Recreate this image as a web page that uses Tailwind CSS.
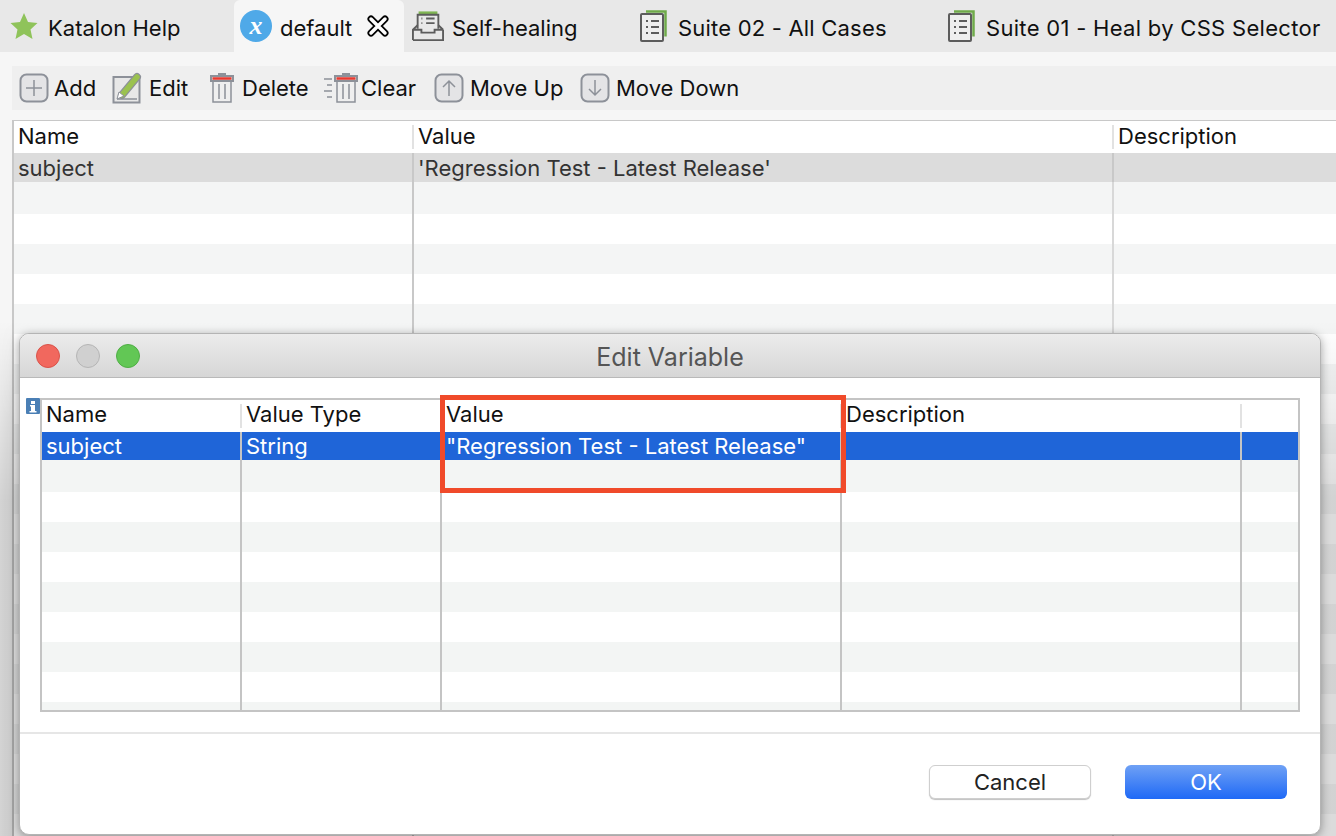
<!DOCTYPE html>
<html lang="en">
<head>
  <meta charset="UTF-8" />
  <title>Katalon Edit Variable</title>
  <script src="https://cdn.jsdelivr.net/npm/@tailwindcss/browser@4"></script>
</head>
<body class="relative w-[1336px] h-[836px] overflow-hidden bg-[#f6f6f6] text-[22px] leading-[28px] text-[#111] font-['Inter','Liberation_Sans',sans-serif]">

  <!-- Tabs -->
  <div class="flex h-[52px] bg-[#e8e8e8]">
    <div class="w-[234px] flex items-center pl-[10px] gap-[10px]">
      <svg class="w-[28px] h-[28px]" viewBox="0 0 28 28"><path d="M14 1l4 9 9.500 1-7 6.500 2 9.500-8.500-5-8.500 5 2-9.500-7-6.500 9.500-1z" fill="#8fc35a"/></svg>
      <span class="pt-[4px]">Katalon Help</span>
    </div>
    <div class="w-[170px] flex items-center pl-[6px] bg-[#f6f6f6] rounded-t-md">
      <div class="w-[32px] h-[32px] rounded-full bg-[#4fa9e8] flex items-center justify-center text-white font-bold italic text-[26px] leading-[26px] font-['Liberation_Serif',serif]">x</div>
      <span class="ml-[8px] pt-[4px]">default</span>
      <svg class="ml-[15px] w-[22px] h-[22px]" viewBox="0 0 22 22" fill="none" stroke-linecap="round"><path d="M4 4l14 14M18 4L4 18" stroke="#000" stroke-width="7"/><path d="M4 4l14 14M18 4L4 18" stroke="#fff" stroke-width="3.500"/></svg>
    </div>
    <div class="w-[228px] flex items-center pl-[8px] gap-[8px]">
      <svg class="w-[32px] h-[34px]" viewBox="0 0 34 34" fill="none" stroke="#5c5c5c" stroke-width="2"><path d="M7 3h20" stroke="#7fb552" stroke-width="3"/><path d="M6 20V5h22v15"/><path d="M1 32V21l5-5M33 21v11H1M33 21l-5-5M1 21h9v3h14v-3h9"/><path d="M10 9h1M15 9h9M10 14h1M15 14h9"/></svg>
      <span class="pt-[4px]">Self-healing</span>
    </div>
    <div class="w-[316px] flex items-center pl-[8px] gap-[11px]">
      <svg class="w-[27px] h-[32px]" viewBox="0 0 27 32" fill="none"><path d="M6 1.500h19.500v25" stroke="#6faa4a" stroke-width="2.500"/><rect x="1" y="4" width="22" height="27" rx="1" fill="#eee" stroke="#5c5c5c" stroke-width="2"/><path d="M6 11h2M11 11h8M6 17h2M11 17h8M6 23h2M11 23h8" stroke="#5c5c5c" stroke-width="2"/></svg>
      <span class="pt-[4px] tracking-[0.2px]">Suite 02 - All Cases</span>
    </div>
    <div class="flex-1 flex items-center gap-[11px] whitespace-nowrap">
      <svg class="w-[27px] h-[32px] shrink-0" viewBox="0 0 27 32" fill="none"><path d="M6 1.500h19.500v25" stroke="#6faa4a" stroke-width="2.500"/><rect x="1" y="4" width="22" height="27" rx="1" fill="#eee" stroke="#5c5c5c" stroke-width="2"/><path d="M6 11h2M11 11h8M6 17h2M11 17h8M6 23h2M11 23h8" stroke="#5c5c5c" stroke-width="2"/></svg>
      <span class="pt-[4px] tracking-[0.3px]">Suite 01 - Heal by CSS Selector</span>
    </div>
  </div>

  <!-- Toolbar -->
  <div class="mt-[14px] ml-[12px] h-[44px] bg-[#efefef] flex items-center pl-[7px]">
    <div class="w-[93px] flex items-center gap-[5px]">
      <svg class="w-[30px] h-[30px]" viewBox="0 0 30 30" fill="#e4e4e6" stroke="#8d9199" stroke-width="2"><rect x="1.500" y="1.500" width="27" height="27" rx="6"/><path d="M15 7v16M7 15h16" stroke-width="1.500"/></svg>
      <span>Add</span>
    </div>
    <div class="w-[98px] flex items-center gap-[5px]">
      <svg class="w-[32px] h-[32px]" viewBox="0 0 32 32" fill="none"><rect x="1.500" y="5" width="26" height="25.500" fill="#e8e8e8" stroke="#8d9199" stroke-width="2"/><path d="M5 27h20" stroke="#8d9199" stroke-width="1.500"/><path d="M10 23L25 5" stroke="#8d9199" stroke-width="8" stroke-linecap="round"/><path d="M10 23L25 5" stroke="#9bc250" stroke-width="5.500" stroke-linecap="round"/><path d="M5 27l2-7 5 4z" fill="#fff" stroke="#8d9199" stroke-width="1"/></svg>
      <span>Edit</span>
    </div>
    <div class="w-[114px] flex items-center gap-[8px]">
      <svg class="w-[24px] h-[32px]" viewBox="0 0 24 32" fill="none" stroke="#8d9199" stroke-width="2"><path d="M8 2h8"/><rect x="1" y="4" width="22" height="5" fill="#ddd"/><path d="M2.500 6.500h19" stroke="#e8392f" stroke-width="2.500"/><path d="M3 9v21h18V9M9 12v15M15 12v15" stroke-width="1.500"/></svg>
      <span>Delete</span>
    </div>
    <div class="w-[110px] flex items-center gap-[3px]">
      <svg class="w-[34px] h-[32px]" viewBox="0 0 34 32" fill="none" stroke="#8d9199" stroke-width="2"><path d="M0 7h8M3 13h5M0 19h8M3 25h5" stroke-width="1.500"/><path d="M18 2h8"/><rect x="11" y="4" width="22" height="5" fill="#ddd"/><path d="M12.500 6.500h19" stroke="#e8392f" stroke-width="2.500"/><path d="M13 9v21h18V9M19 12v15M25 12v15" stroke-width="1.500"/></svg>
      <span>Clear</span>
    </div>
    <div class="w-[146px] flex items-center gap-[6px]">
      <svg class="w-[30px] h-[30px]" viewBox="0 0 30 30" fill="#e4e4e6" stroke="#8d9199" stroke-width="2"><rect x="1.500" y="1.500" width="27" height="27" rx="6"/><path d="M15 23V8M9 14l6-6 6 6" fill="none" stroke-width="1.500"/></svg>
      <span>Move Up</span>
    </div>
    <div class="flex items-center gap-[6px]">
      <svg class="w-[30px] h-[30px]" viewBox="0 0 30 30" fill="#e4e4e6" stroke="#8d9199" stroke-width="2"><rect x="1.500" y="1.500" width="27" height="27" rx="6"/><path d="M15 7v15M9 16l6 6 6-6" fill="none" stroke-width="1.500"/></svg>
      <span>Move Down</span>
    </div>
  </div>

  <!-- Variables table behind the dialog -->
  <div class="relative mt-[10px] ml-[12px] border-l-2 border-t border-[#c8c8c8] bg-white h-[716px] overflow-hidden">
    <div class="grid grid-cols-[400px_700px_1fr] h-[32px]">
      <div class="pl-[4px] border-r-2 border-[#e2e2e2] my-[4px] leading-[22px]">Name</div>
      <div class="pl-[4px] border-r-2 border-[#e2e2e2] my-[4px] leading-[22px]">Value</div>
      <div class="pl-[4px] my-[4px] leading-[22px]">Description</div>
    </div>
    <div class="grid grid-cols-[400px_700px_1fr] h-[29px] bg-[#dcdcdc] text-[#333] leading-[30px]">
      <div class="pl-[4px] border-r-2 border-[#c8c8c8]">subject</div>
      <div class="pl-[4px] border-r-2 border-[#c8c8c8]">'Regression Test - Latest Release'</div>
      <div></div>
    </div>
    <div class="h-[32px] bg-[#f4f5f5]"></div>
    <div class="h-[622px] bg-[repeating-linear-gradient(180deg,#ffffff_0,#ffffff_30px,#f4f5f5_30px,#f4f5f5_60px)]"></div>
    <div class="absolute top-[61px] bottom-0 left-[398px] w-[2px] bg-[#c8c8c8]"></div>
    <div class="absolute top-[61px] bottom-0 left-[1098px] w-[2px] bg-[#d8d8d8]"></div>
  </div>

  <!-- Dim layer under the sheet -->
  <div class="absolute left-0 right-0 top-[320px] bottom-0 bg-[linear-gradient(180deg,transparent,rgba(0,0,0,0.14)_180px)]"></div>
  <div class="absolute left-0 w-[14px] top-[320px] bottom-0 bg-[linear-gradient(90deg,transparent,rgba(0,0,0,0.05))] [mask-image:linear-gradient(180deg,transparent,black_100px)]"></div>

  <!-- Edit Variable dialog -->
  <div class="absolute left-[19px] top-[333px] w-[1302px] h-[502px] bg-white rounded-[10px] border border-[#b4b4b4] shadow-[0_2px_10px_rgba(0,0,0,0.35)] overflow-hidden flex flex-col">
    <div class="relative h-[44px] shrink-0 bg-[linear-gradient(180deg,#ececec,#d6d6d6)] border-b border-[#b9b9b9] flex items-center justify-center text-[25px] text-[#555] pt-[3px]">
      <div class="absolute left-[16px] top-[10px] flex gap-[16px]">
        <div class="w-[24px] h-[24px] rounded-full bg-[#f1685e] border border-[#d9534a]"></div>
        <div class="w-[24px] h-[24px] rounded-full bg-[#d0d0d0] border border-[#b5b5b5]"></div>
        <div class="w-[24px] h-[24px] rounded-full bg-[#62c755] border border-[#4fae45]"></div>
      </div>
      Edit Variable
    </div>

    <div class="relative flex-1">
      <svg class="absolute left-[6px] top-[20px] w-[14px] h-[16px]" viewBox="0 0 14 16"><rect width="14" height="16" rx="1" fill="#4a7fb5"/><path d="M5 3h4v3H5zM4 7h5v6h1.500v1.500h-7V13H5V8.500H4z" fill="#fff"/></svg>

      <div class="absolute left-[20px] top-[20px] w-[1260px] h-[314px] border-2 border-[#c4c4c4] overflow-hidden">
        <div class="grid grid-cols-[200px_200px_400px_400px_1fr] h-[32px] bg-white">
          <div class="pl-[4px] border-r-2 border-[#e2e2e2] my-[4px] leading-[20px]">Name</div>
          <div class="pl-[4px] border-r-2 border-[#e2e2e2] my-[4px] leading-[20px]">Value Type</div>
          <div class="pl-[4px] border-r-2 border-[#e2e2e2] my-[4px] leading-[20px]">Value</div>
          <div class="pl-[4px] border-r-2 border-[#e2e2e2] my-[4px] leading-[20px]">Description</div>
          <div></div>
        </div>
        <div class="grid grid-cols-[200px_200px_400px_400px_1fr] h-[28px] bg-[#1f65d8] text-white leading-[28px]">
          <div class="pl-[4px] border-r-2 border-[#c4c4c4]">subject</div>
          <div class="pl-[4px] border-r-2 border-[#c4c4c4]">String</div>
          <div class="pl-[4px] border-r-2 border-[#c4c4c4]">"Regression Test - Latest Release"</div>
          <div class="border-r-2 border-[#c4c4c4]"></div>
          <div></div>
        </div>
        <div class="h-[32px] bg-[#f3f5f4]"></div>
        <div class="h-[218px] bg-[repeating-linear-gradient(180deg,#ffffff_0,#ffffff_30px,#f3f5f4_30px,#f3f5f4_60px)]"></div>
        <div class="absolute top-[60px] bottom-0 left-[198px] w-[2px] bg-[#c4c4c4]"></div>
        <div class="absolute top-[60px] bottom-0 left-[398px] w-[2px] bg-[#c4c4c4]"></div>
        <div class="absolute top-[60px] bottom-0 left-[798px] w-[2px] bg-[#c4c4c4]"></div>
        <div class="absolute top-[60px] bottom-0 left-[1198px] w-[2px] bg-[#c4c4c4]"></div>
      </div>

      <!-- red annotation -->
      <div class="absolute left-[420px] top-[17px] w-[406px] h-[98px] border-[5px] border-[#f04a2a]"></div>

      <div class="absolute left-0 right-0 top-[354px] h-[2px] bg-[#e6e6e6]"></div>

      <div class="absolute right-[33px] top-[387px] flex gap-[34px]">
        <button class="w-[162px] h-[34px] bg-white rounded-[6px] border border-[#cfcfcf] shadow-[0_1px_1px_rgba(0,0,0,0.25)] text-[#222] leading-[32px]">Cancel</button>
        <button class="w-[162px] h-[34px] rounded-[6px] bg-[linear-gradient(180deg,#6fa1f5,#1f69f6)] text-white leading-[34px]">OK</button>
      </div>
    </div>
  </div>
</body>
</html>
